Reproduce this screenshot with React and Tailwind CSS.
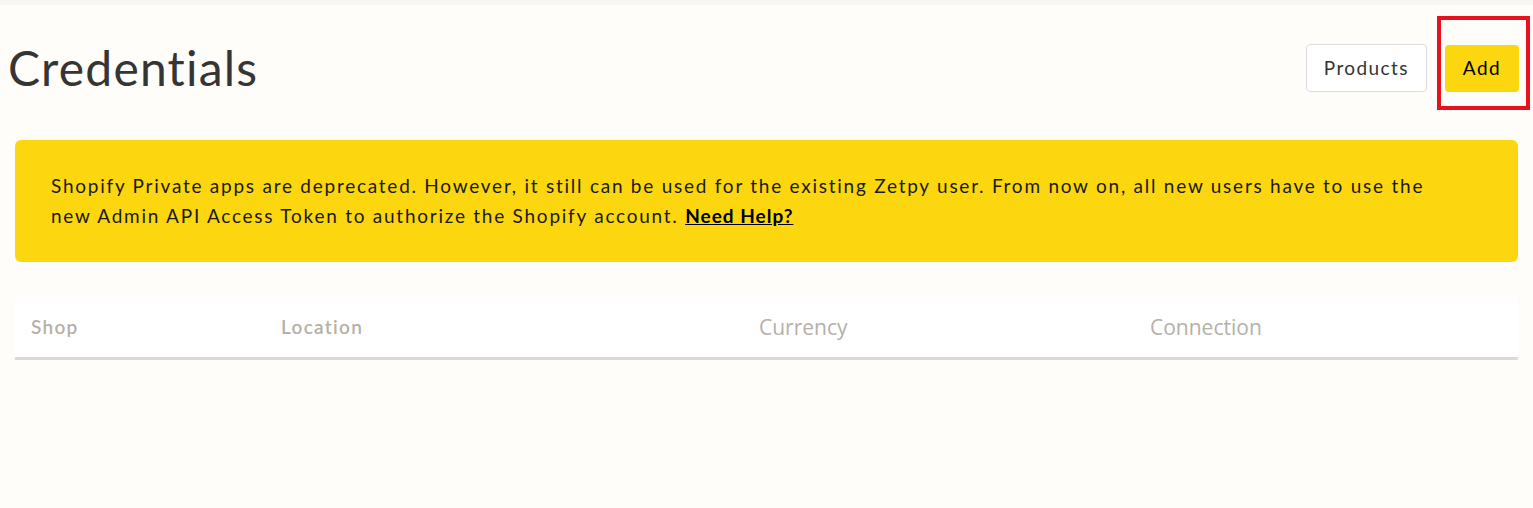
export default function App() {
  return (
    <div className="min-h-[508px] bg-[#fffdf9] font-['Lato',sans-serif] text-[#333333]">
      <div className="h-[5px] bg-[#f7f6f2]" />
      <div className="relative flex items-center justify-between pl-2 pr-[14px] pt-[39px]">
        <h1 className="text-[48px] leading-[48px] tracking-[1.2px] text-[#353535]">Credentials</h1>
        <div className="flex items-center gap-[18px]">
          <button className="h-[48px] rounded-[4px] border border-[#dcdcdc] bg-white px-[17px] text-[19px] tracking-[1.4px] text-[#333]">
            Products
          </button>
          <button className="h-[47px] rounded-[4px] bg-[#fcd60f] px-[18px] text-[19px] tracking-[1.4px] text-black">
            Add
          </button>
        </div>
        <div className="pointer-events-none absolute right-[3px] top-[11px] h-[94px] w-[93px] border-4 border-[#e8121e]" />
      </div>

      <div className="mx-[15px] mt-[48px] rounded-[6px] bg-[#fcd60f] px-9 pt-[31px] pb-[31px] text-[19px] leading-[30px] tracking-[1.75px] text-[#1a1a1a]">
        Shopify Private apps are deprecated. However, it still can be used for the existing Zetpy user. From now on, all new users have to use the
        <br />
        new Admin API Access Token to authorize the Shopify account.{" "}
        <a href="#" className="font-bold tracking-[1px] text-black underline">Need Help?</a>
      </div>

      <div className="mx-[15px] mt-[36px] grid grid-cols-[250px_478px_391px_1fr] border-b-[3px] border-[#dadada] bg-white">
        <div className="px-4 py-[15px] text-[19px] font-semibold tracking-[1.3px] text-[#b5b0a8]">Shop</div>
        <div className="px-4 py-[15px] text-[19px] font-semibold tracking-[1.3px] text-[#b5b0a8]">Location</div>
        <div className="px-4 py-[14px] font-['Open_Sans',sans-serif] text-[21px] leading-[30px] text-[#b5b0a8]">Currency</div>
        <div className="px-4 py-[14px] font-['Open_Sans',sans-serif] text-[21px] leading-[30px] text-[#b5b0a8]">Connection</div>
      </div>
    </div>
  );
}
